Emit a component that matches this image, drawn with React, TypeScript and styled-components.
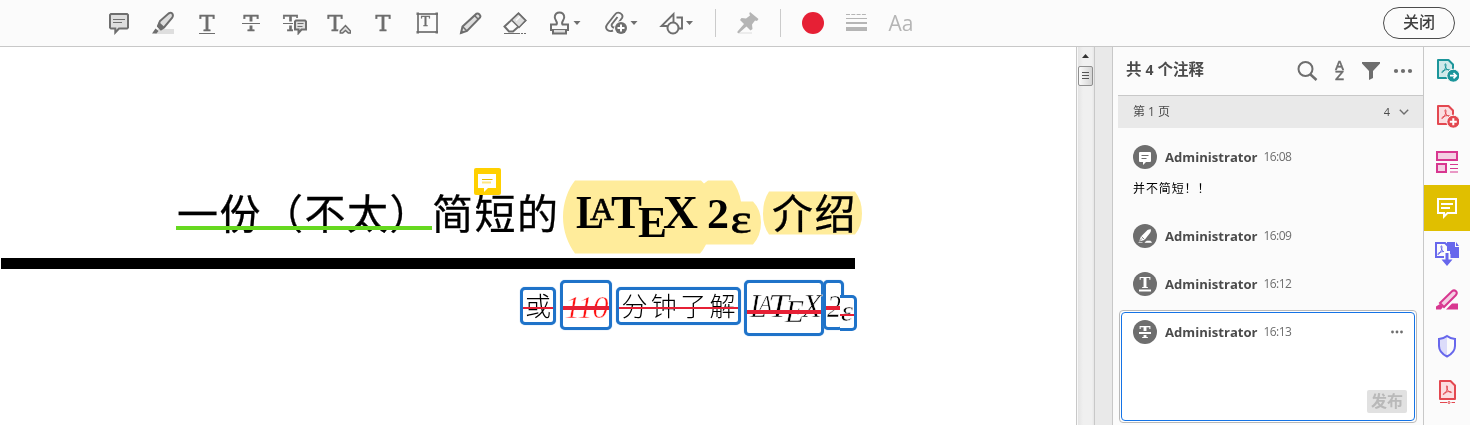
import React from 'react';
import styled, { createGlobalStyle, css } from 'styled-components';

const Global = createGlobalStyle`
  * { box-sizing: border-box; }
  body { margin: 0; background: #fff; overflow: hidden; font-family: "Open Sans", "Noto Sans CJK SC", sans-serif; }
  svg { display: block; flex: none; }
`;

const INK = '#6e6e6e';
const SOFT = '#dedede';

const Page = styled.div`
  width: 1470px;
  height: 425px;
  display: flex;
  flex-direction: column;
  overflow: hidden;
`;
const Toolbar = styled.header`
  height: 47px;
  flex: none;
  display: flex;
  align-items: center;
  padding: 0 15px 0 97px;
  background: #fbfbfb;
  border-bottom: 1px solid #c8c8c8;
`;
const Tool = styled.div<{ $w?: number; $ml?: number }>`
  width: ${(p) => p.$w ?? 44}px;
  margin-left: ${(p) => p.$ml ?? 0}px;
  height: 46px;
  flex: none;
  display: flex;
  align-items: center;
  justify-content: center;
`;
const Divider = styled.i<{ $ml: number }>`
  width: 1px;
  height: 28px;
  flex: none;
  margin-left: ${(p) => p.$ml}px;
  background: #cbcbcb;
`;
const ColorDot = styled.i`
  width: 22px;
  height: 22px;
  border-radius: 50%;
  background: #e62035;
`;
const FontTool = styled.span`
  font: 500 21px/26px "Open Sans", sans-serif;
  color: #b5b5b5;
`;
const CloseButton = styled.button`
  width: 72px;
  height: 32px;
  margin-left: auto;
  padding: 0 0 3px;
  border: 1px solid #4b4b4b;
  border-radius: 16px;
  background: transparent;
  color: #3f3f3f;
  font: 500 16px/27px "Noto Sans CJK SC", sans-serif;
`;

const Body = styled.div`
  flex: 1;
  display: flex;
  min-height: 0;
`;
const Doc = styled.main`
  position: relative;
  width: 1076px;
  flex: none;
  background: #fff;
  overflow: hidden;
`;
const TitleRow = styled.div`
  height: 211px;
  padding: 132px 0 0 177px;
  display: flex;
  align-items: flex-start;
`;
const Han = styled.span<{ $w: number }>`
  width: ${(p) => p.$w}px;
  flex: none;
  white-space: nowrap;
  font: 400 41px/64px "Noto Sans CJK SC", sans-serif;
  letter-spacing: 1.5px;
  -webkit-text-stroke: 0.3px #000;
  color: #000;
`;
const Rule = styled.div`
  width: 854px;
  height: 11px;
  margin-left: 1px;
  background: #000;
`;
const SubtitleRow = styled.div`
  display: flex;
  align-items: flex-start;
  padding: 11px 0 0 520px;
`;
const Struck = styled.span<{ $w: number; $h: number; $top?: number; $ml?: number; $line: number; $thick: number; $cut?: boolean }>`
  position: relative;
  width: ${(p) => p.$w}px;
  height: ${(p) => p.$h}px;
  margin-top: ${(p) => p.$top ?? 0}px;
  margin-left: ${(p) => p.$ml ?? 0}px;
  flex: none;
  display: flex;
  align-items: center;
  justify-content: center;
  border: 3px solid #1f73c9;
  border-radius: 5px;
  background: #fff;
  box-shadow: 0 0 1px #6ba6e2;
  white-space: nowrap;
  ${(p) => p.$cut && css`border-left: 0; border-radius: 0 5px 5px 0; box-shadow: none;`}
  &::after {
    content: "";
    position: absolute;
    left: 0;
    right: 0;
    top: ${(p) => p.$line}px;
    height: ${(p) => p.$thick}px;
    background: #e62035;
  }
`;
const Kai = styled.span`
  font: 300 26px/30px "Noto Sans CJK SC", sans-serif;
  letter-spacing: 3.4px;
  margin-right: -3.4px;
  padding-bottom: 3px;
  color: #000;
`;
const Digits = styled.span`
  font: italic 400 32px/36px "Liberation Serif", serif;
  letter-spacing: -0.8px;
  padding-top: 3px;
  -webkit-text-stroke: 0.5px #fff;
  color: #ff1010;
`;
const Underline = styled.i`
  position: absolute;
  left: 176px;
  top: 179px;
  width: 256px;
  height: 4px;
  background: #66d91f;
`;
const Highlight = styled.svg`
  position: absolute;
  left: 560px;
  top: 131px;
  mix-blend-mode: multiply;
`;
const NotePin = styled.svg`
  position: absolute;
  left: 474px;
  top: 121px;
`;

const ScrollTrack = styled.div`
  width: 19px;
  flex: none;
  display: flex;
  flex-direction: column;
  align-items: center;
  padding-top: 7px;
  border: solid #c8c8c8;
  border-width: 0 1px;
  background: linear-gradient(90deg, #f8f8f8 0 1px, #e4e4e4 1px, #f0f0f0 6px, #f0f0f0 15px, #e5e5e5);
`;
const Thumb = styled.div`
  width: 15px;
  height: 20px;
  margin-top: 8px;
  padding: 5px 3px;
  display: flex;
  flex-direction: column;
  gap: 2px;
  border: 1px solid #8f8f8f;
  border-radius: 2px;
  background: linear-gradient(90deg, #fafafa, #d4d4d4);
  i { height: 1px; background: #555; flex: none; }
`;
const Gutter = styled.div`
  width: 18px;
  flex: none;
  background: #e9e9e9;
  border-right: 1px solid #c8c8c8;
`;
const Panel = styled.aside`
  width: 311px;
  flex: none;
  background: #fbfbfb;
  border-right: 1px solid #c8c8c8;
  overflow: hidden;
`;
const PanelHead = styled.div`
  height: 48px;
  display: flex;
  align-items: center;
  padding: 0 8px 3px 13px;
`;
const PanelTitle = styled.h2`
  margin: 0;
  flex: 1;
  font: 600 15.5px/20px "Open Sans", "Noto Sans CJK SC", sans-serif;
  color: #4b4b4b;
  small { font-size: 14px; font-weight: 700; }
`;
const HeadIcons = styled.div`
  display: flex;
  align-items: center;
  gap: 8px;
  padding-top: 3px;
`;
const Section = styled.div`
  height: 33px;
  margin-left: 5px;
  padding: 0 14px 0 15px;
  display: flex;
  align-items: center;
  gap: 9px;
  background: #e9e9e9;
  border-top: 1px solid #c8c8c8;
  font: 400 12px/18px "Open Sans", "Noto Sans CJK SC", sans-serif;
  color: #4b4b4b;
  span:first-child { flex: 1; }
  span + span { font-size: 11px; }
`;
const Comment = styled.article<{ $h: number; $pt?: number }>`
  height: ${(p) => p.$h}px;
  padding: ${(p) => p.$pt ?? 12}px 0 0 20px;
`;
const ActiveComment = styled.article`
  width: 298px;
  height: 113px;
  margin: 1px 0 0 6px;
  padding: 1px;
  border: 1px solid #b9b9b9;
  border-radius: 4px;
  background: #fff;
`;
const ActiveInner = styled.div`
  height: 100%;
  padding: 7px 7px 7px 11px;
  display: flex;
  flex-direction: column;
  justify-content: space-between;
  border: 1px solid #1473e6;
  border-radius: 4px;
`;
const Meta = styled.div`
  display: flex;
  align-items: center;
  height: 24px;
  padding-right: 3px;
`;
const Author = styled.b`
  margin-left: 8px;
  font: 700 13.1px/18px "Open Sans", sans-serif;
  color: #4b4b4b;
`;
const Time = styled.span`
  margin-left: 6px;
  flex: 1;
  font: 400 12px/18px "Open Sans", sans-serif;
  letter-spacing: -0.6px;
  color: #6e6e6e;
`;
const Message = styled.p`
  margin: 10px 0 0;
  font: 400 12px/18px "Noto Sans CJK SC", sans-serif;
  letter-spacing: 0.9px;
  color: #000;
`;
const PostButton = styled.button`
  align-self: flex-end;
  width: 40px;
  height: 23px;
  padding: 0 0 2px;
  border: 0;
  border-radius: 2px;
  background: #e1e1e1;
  color: #b9b9b9;
  font: 700 16px/21px "Noto Sans CJK SC", sans-serif;
`;
const Rail = styled.nav`
  flex: 1;
  background: #fbfbfb;
`;
const RailItem = styled.div<{ $active?: boolean }>`
  height: 46px;
  display: flex;
  align-items: center;
  justify-content: center;
  background: ${(p) => (p.$active ? '#e0bf00' : 'transparent')};
`;

const Icon = ({ w = 24, h = 24, children }: { w?: number; h?: number; children: React.ReactNode }) => (
  <svg width={w} height={h} viewBox={`0 0 ${w} ${h}`} fill="none" stroke={INK} strokeWidth="2">{children}</svg>
);

const Tee = ({ x = 4.5 }: { x?: number }) => (
  <text x={x} y="20" fontFamily="DejaVu Serif" fontSize="23" textLength="15" lengthAdjust="spacingAndGlyphs" fill={INK} stroke={INK} strokeWidth=".5">T</text>
);
const Caret = ({ x }: { x: number }) => <path d={`M${x} 10h7l-3.5 4z`} fill={INK} stroke="none" />;

const Acrobat = ({ x, y, color }: { x: number; y: number; color: string }) => (
  <path
    transform={`translate(${x} ${y})`}
    d="M4.3 .8C5.6 .8 4.9 3.500 4.300 5.200 3.500 7.300 2 9.600.900 9.500.100 8.900 2.300 7.300 4.700 6.800 7 6.300 9 6.600 9 7.300 8.500 8.200 6.200 6.700 5.200 5.200 4.200 3.700 3.600.800 4.300.800z"
    stroke={color}
    strokeWidth="1"
  />
);

type Glyph = { ch: string; x: number; y: number; size: number; w: number; light?: boolean };
const Lettering = ({ glyphs, w, h, bold, italic }: { glyphs: Glyph[]; w: number; h: number; bold?: boolean; italic?: boolean }) => (
  <svg width={w} height={h} overflow="visible" fontFamily="Liberation Serif" fontStyle={italic ? 'italic' : 'normal'}>
    {glyphs.map((g) => (
      <text
        key={g.ch}
        x={g.x}
        y={g.y}
        fontSize={g.size}
        fontWeight={bold && !g.light ? 700 : 400}
        textLength={g.w}
        lengthAdjust="spacingAndGlyphs"
        stroke={italic ? '#fff' : g.light ? '#000' : 'none'}
        strokeWidth={italic ? 0.5 : 0.7}
      >
        {g.ch}
      </text>
    ))}
  </svg>
);
const titleLogo: Glyph[] = [
  { ch: 'L', x: 15, y: 49, size: 46, w: 28 },
  { ch: 'A', x: 29, y: 41, size: 31, w: 24, light: true },
  { ch: 'T', x: 50, y: 49, size: 46, w: 31 },
  { ch: 'E', x: 77, y: 58, size: 44, w: 29 },
  { ch: 'X', x: 102, y: 49, size: 46, w: 35 },
  { ch: '2', x: 146, y: 49, size: 42, w: 22 },
  { ch: 'ε', x: 169.5, y: 53.5, size: 41, w: 21, light: true },
];
const subLogo: Glyph[] = [
  { ch: 'L', x: 3, y: 34, size: 33, w: 17 },
  { ch: 'A', x: 12, y: 28, size: 23, w: 13 },
  { ch: 'T', x: 21, y: 34, size: 33, w: 21 },
  { ch: 'E', x: 38, y: 39, size: 32, w: 19 },
  { ch: 'X', x: 55, y: 34, size: 33, w: 20 },
];

type Kind = 'note' | 'mark' | 'under' | 'strike';
const Avatar = ({ kind }: { kind: Kind }) => (
  <svg width="24" height="24" viewBox="0 0 24 24">
    <circle cx="12" cy="12" r="12" fill="#6e6e6e" />
    {kind === 'note' && (
      <>
        <path d="M7 7h10a1 1 0 0 1 1 1v8a1 1 0 0 1-1 1h-4l-3 3v-3H7a1 1 0 0 1-1-1V8a1 1 0 0 1 1-1z" fill="#fff" />
        <path d="M8.500 10.500h7M8.500 13.500h5" stroke="#6e6e6e" />
      </>
    )}
    {kind === 'mark' && (
      <>
        <path d="M6 17.500l2-5L14.500 6q2.500-1 3.500-.500 0 2-1 3.500L11.500 16z" fill="#fff" />
        <path d="M8.500 12.500l3 3M6 17.500l3-3" stroke="#6e6e6e" strokeWidth=".8" />
        <path d="M5.500 18.500h4M12 18.500h6.500l-1-1.500h-4z" stroke="#fff" fill="#fff" strokeWidth=".6" />
      </>
    )}
    {kind === 'under' && (
      <>
        <text x="6.500" y="16.300" fontFamily="DejaVu Serif" fontWeight="700" fontSize="14" textLength="11" lengthAdjust="spacingAndGlyphs" fill="#fff">T</text>
        <path d="M6 18.500h12" stroke="#fff" strokeWidth="2" />
      </>
    )}
    {kind === 'strike' && (
      <>
        <text x="6.500" y="18" fontFamily="DejaVu Serif" fontWeight="700" fontSize="16" textLength="11" lengthAdjust="spacingAndGlyphs" fill="#fff">T</text>
        <path d="M6 11.500h12M6 14.500h12" stroke="#6e6e6e" strokeWidth="1" />
        <path d="M6 13h12" stroke="#fff" strokeWidth="2" />
      </>
    )}
  </svg>
);

const Entry = ({ kind, time, more }: { kind: Kind; time: string; more?: boolean }) => (
  <Meta>
    <Avatar kind={kind} />
    <Author>Administrator</Author>
    <Time>{time}</Time>
    {more && (
      <svg width="14" height="4" fill="#6e6e6e">
        <circle cx="2.500" cy="2" r="1.400" /><circle cx="7" cy="2" r="1.400" /><circle cx="11.500" cy="2" r="1.400" />
      </svg>
    )}
  </Meta>
);

export default function App() {
  return (
    <Page>
      <Global />
      <Toolbar>
        <Tool>
          <Icon>
            <path d="M4 3h16l1 1v12.500l-1 1h-8l-3.700 4v-4H4l-1-1V4z" fill={SOFT} />
            <path d="M6 8.500h12M6 11.500h9" strokeWidth="1" />
          </Icon>
        </Tool>
        <Tool>
          <Icon>
            <path d="M7 18h16v5H4z" fill={SOFT} stroke="none" />
            <path d="M7 15l2-5 8.500-7.500q3-1.500 4 .5 1 2-.500 4L13 16.500l-3 2z" fill={SOFT} />
            <path d="M6 15.500L8 11l5.500 5-4 3zM1 22.500l3.500-5 3 2.500-2 2.500z" fill={INK} stroke="none" />
          </Icon>
        </Tool>
        <Tool>
          <Icon><Tee /><path d="M4 22.500h16" strokeWidth="1" /></Icon>
        </Tool>
        <Tool>
          <Icon>
            <Tee />
            <path d="M3 12.500h18" stroke="#fbfbfb" strokeWidth="4" />
            <path d="M3 12.500h18" strokeWidth="1" />
          </Icon>
        </Tool>
        <Tool>
          <Icon w={26}>
            <Tee x={1} />
            <path d="M0 12.500h18" stroke="#fbfbfb" strokeWidth="4" />
            <path d="M1 12.500h12" strokeWidth="1" />
            <path d="M13 9h12v11h-5l-4 4v-4h-3z" fill={SOFT} stroke="#fbfbfb" strokeWidth="4" />
            <path d="M14 9.500h9l1 1v8h-4.500l-3 3.500v-3.500H13v-8z" fill={SOFT} />
            <path d="M15.500 12.500h6M15.500 15.500h5" strokeWidth="1" />
          </Icon>
        </Tool>
        <Tool>
          <Icon>
            <Tee x={0.5} />
            <path d="M13.300 20l5.200-6 5 6v2.500h-2.500L18.500 20 16 22.500h-2.700z" fill={SOFT} stroke="#fbfbfb" strokeWidth="4" />
            <path d="M13.300 20l5.200-5.500 5 5.500v2h-2.200l-2.800-2.500L15.700 22h-2.400z" fill={SOFT} strokeWidth="1.500" />
          </Icon>
        </Tool>
        <Tool><Icon><Tee /></Icon></Tool>
        <Tool>
          <Icon>
            <rect x="3" y="3" width="19" height="18" strokeWidth="1.700" />
            <path d="M1.500 1.500h2.500v2.500h-2.500zM20.500 1.500h2.500v2.500h-2.500zM1.500 20h2.500v2.500h-2.500zM20.500 20h2.500v2.500h-2.500z" fill={INK} stroke="none" />
            <text x="6" y="15" fontFamily="DejaVu Serif" fontSize="12.500" textLength="9" lengthAdjust="spacingAndGlyphs" fill={INK} strokeWidth=".4">T</text>
          </Icon>
        </Tool>
        <Tool>
          <Icon>
            <path d="M2 22l1.500-6.500L17.500 2.700q1.500-.7 3 .8t.6 3L8 20z" fill={SOFT} />
            <path d="M3.500 15.500L8 20M15.500 4.500l4 4" strokeWidth="1.500" />
            <path d="M1 23l1.500-4 2.500 2.500z" fill={INK} stroke="none" />
          </Icon>
        </Tool>
        <Tool>
          <Icon>
            <path d="M1.500 15.500L15.500 2.500l7 7L10 20.500H6z" fill="#fbfbfb" />
            <path d="M8.500 9l7-6.500 7 7-6.500 7z" fill={SOFT} strokeWidth="1.500" />
            <path d="M13 9.500l4-4" stroke="#fff" strokeWidth="1.500" />
            <path d="M1 22.500h14" strokeWidth="1" /><path d="M15 22.500h8" strokeWidth="1" strokeDasharray="2 1" />
          </Icon>
        </Tool>
        <Tool $w={56}>
          <Icon w={32}>
            <path d="M7.500 13.500c2-3-2.500-4.500-1.700-8C6.800 0 14.200 0 15.200 5.500c.8 3.500-3.700 5-1.700 8h5.500v5.500H2v-5.500z" />
            <path d="M4 19v3.500h13V19" fill={SOFT} />
            <Caret x={24.5} />
          </Icon>
        </Tool>
        <Tool $w={56}>
          <Icon w={34}>
            <path d="M9 19.500c-5 2-9-2-5.500-6.500L11 3.500c3-4 9-.5 7 3.500L12 15c-2 3-5.500.500-4-2l5.500-7" strokeWidth="1.900" />
            <circle cx="17" cy="17" r="7" fill="#fbfbfb" stroke="none" />
            <circle cx="17" cy="17" r="6" fill={INK} stroke="none" />
            <path d="M17 13.500v7M13.500 17h7" stroke="#fff" />
            <Caret x={26.5} />
          </Icon>
        </Tool>
        <Tool $w={56}>
          <Icon w={36}>
            <path d="M8 15H2.500L14.500 3v11M17.500 6.500H23v11h-4" strokeWidth="1.900" />
            <circle cx="14" cy="17" r="5.500" fill="#fbfbfb" />
            <Caret x={27} />
          </Icon>
        </Tool>
        <Divider $ml={10} />
        <Tool $ml={10}>
          <Icon>
            <path d="M2 22h14" stroke="#ececec" />
            <path d="M14 1l8.500 7-1.500 2-2-.5-3 4 .5 4.500-2 1.500-4-4L3 22H1.500v-1.500L8 13 4 9l1.500-2 4.500.5 4-3-.7-2z" fill="#b5b5b5" stroke="none" />
          </Icon>
        </Tool>
        <Divider $ml={10} />
        <Tool $ml={10}><ColorDot /></Tool>
        <Tool>
          <Icon>
            <g stroke="#b5b5b5">
              <path d="M1 3.500h21" strokeWidth="1" strokeDasharray="4 1.300" />
              <path d="M1 7.500h21" strokeWidth="1" /><path d="M1 12h21" />
              <path d="M1 18h21" strokeWidth="4" />
            </g>
          </Icon>
        </Tool>
        <Tool><FontTool>Aa</FontTool></Tool>
        <CloseButton>关闭</CloseButton>
      </Toolbar>
      <Body>
        <Doc>
          <TitleRow>
            <Han $w={384}>一份（不太）简短的</Han>
            <Lettering glyphs={titleLogo} w={211} h={60} bold />
            <Han $w={90}>介绍</Han>
          </TitleRow>
          <Rule />
          <SubtitleRow>
            <Struck $w={36} $h={38} $top={7} $line={17} $thick={2}><Kai>或</Kai></Struck>
            <Struck $w={52} $h={50} $ml={4} $line={23} $thick={4}><Digits>110</Digits></Struck>
            <Struck $w={125} $h={38} $top={7} $ml={4} $line={17} $thick={2}><Kai>分钟了解</Kai></Struck>
            <Struck $w={80} $h={56} $ml={3} $line={27} $thick={4}><Lettering glyphs={subLogo} w={74} h={50} italic /></Struck>
            <Struck $w={21} $h={50} $ml={-1} $line={23} $thick={4}>
              <Lettering glyphs={[{ ch: '2', x: 1, y: 34, size: 31, w: 14 }]} w={15} h={44} italic />
            </Struck>
            <Struck $w={17} $h={36} $top={15} $ml={-4} $line={16} $thick={2} $cut>
              <Lettering glyphs={[{ ch: 'ε', x: 0, y: 23, size: 29, w: 12 }]} w={13} h={30} italic />
            </Struck>
          </SubtitleRow>
          <Highlight width="304" height="78">
            <path d="M15 2.500h126l3 3 4-3h24q7 9 9 21h12q8 8 8 21t-8 22h-47q-3 6-6 9H15C8 66 3 53 3 39S8 11 15 2.500z" fill="#ffec9b" />
            <path d="M209 13.500h86q7 9 7 22t-7 21h-86q-6-8-6-21t6-22z" fill="#ffec9b" />
          </Highlight>
          <Underline />
          <NotePin width="27" height="27" viewBox="0 0 27 27">
            <rect width="27" height="27" rx="2" fill="#ffd000" />
            <path d="M4 6h18v14h-8l-4 4v-4H4z" fill="#fff" />
            <path d="M8 11.500h10.500" stroke="#e6bd00" /><path d="M8 14.500h9" stroke="#ffe680" strokeWidth="2" />
          </NotePin>
        </Doc>
        <ScrollTrack>
          <svg width="7" height="4" viewBox="0 0 7 4"><path d="M0 4L3.500 0 7 4z" fill="#333" /></svg>
          <Thumb><i /><i /><i /></Thumb>
        </ScrollTrack>
        <Gutter />
        <Panel>
          <PanelHead>
            <PanelTitle>共 <small>4</small> 个注释</PanelTitle>
            <HeadIcons>
              <Icon><circle cx="10.500" cy="10" r="7" /><path d="M15.500 15.500l6 5.500" strokeWidth="2.500" /></Icon>
              <Icon>
                <text x="8" y="10.500" fontFamily="Open Sans" fontWeight="600" fontSize="12.500" textLength="9" lengthAdjust="spacingAndGlyphs" fill={INK} strokeWidth=".3">A</text>
                <text x="8" y="21" fontFamily="Open Sans" fontWeight="600" fontSize="12.500" textLength="9" lengthAdjust="spacingAndGlyphs" fill={INK} strokeWidth=".3">Z</text>
              </Icon>
              <Icon><path d="M3 3h18v1.500l-7 7.500v7l-4 2v-9L3 4.500z" fill={INK} stroke="none" /></Icon>
              <Icon>
                <g fill={INK} stroke="none"><circle cx="5" cy="12" r="2.100" /><circle cx="12" cy="12" r="2.100" /><circle cx="19" cy="12" r="2.100" /></g>
              </Icon>
            </HeadIcons>
          </PanelHead>
          <Section>
            <span>第 1 页</span>
            <span>4</span>
            <Icon w={10} h={6}><path d="M.8 .8L5 5 9.200.8" strokeWidth="1.400" /></Icon>
          </Section>
          <Comment $h={84} $pt={17}>
            <Entry kind="note" time="16:08" />
            <Message>并不简短！！</Message>
          </Comment>
          <Comment $h={48}><Entry kind="mark" time="16:09" /></Comment>
          <Comment $h={49}><Entry kind="under" time="16:12" /></Comment>
          <ActiveComment>
            <ActiveInner>
              <Entry kind="strike" time="16:13" more />
              <PostButton>发布</PostButton>
            </ActiveInner>
          </ActiveComment>
        </Panel>
        <Rail>
          <RailItem>
            <Icon>
              <path d="M3 2h10.500L18 6.500V20H3z" fill="#cfe9ea" stroke="#1b959a" strokeLinejoin="round" />
              <Acrobat x={6} y={5} color="#1b959a" />
              <circle cx="18.300" cy="17.700" r="6.500" fill="#1b959a" stroke="#fbfbfb" strokeWidth="1" />
              <path d="M15 17.700h6M18.500 15l2.700 2.700-2.700 2.700" stroke="#fff" strokeWidth="1.700" />
            </Icon>
          </RailItem>
          <RailItem>
            <Icon>
              <path d="M3 2h10.500L18 6.500V20H3z" fill="#fbdde0" stroke="#e34850" strokeLinejoin="round" />
              <Acrobat x={6} y={5} color="#e34850" />
              <circle cx="18.300" cy="17.700" r="6.500" fill="#e34850" stroke="#fbfbfb" strokeWidth="1" />
              <path d="M14.800 17.700h7M18.300 14.200v7" stroke="#fff" />
            </Icon>
          </RailItem>
          <RailItem>
            <Icon>
              <g stroke="#d83790">
                <rect x="2" y="2" width="20" height="8" fill="#f4cfe3" /><rect x="2" y="14" width="9" height="8" fill="#f4cfe3" />
                <path d="M15 14.500h8M15 18.500h8M15 22h8" strokeWidth="1.200" />
              </g>
            </Icon>
          </RailItem>
          <RailItem $active>
            <Icon><path d="M3 3h18v14h-8.500L9 20.500V17H3zM6 8h12M6 12h9" stroke="#fff" strokeWidth="2" /></Icon>
          </RailItem>
          <RailItem>
            <Icon>
              <path d="M12 0h8v5h4v11h-8.500v-4H12z" fill="#6767ec" stroke="none" /><path d="M21 0l3 4h-3z" fill="#6767ec" stroke="none" />
              <path d="M9 15H1V1h9l3 3v5" fill="#fbfbfb" stroke="#6767ec" />
              <Acrobat x={2} y={3} color="#6767ec" />
              <path d="M9 9h6v8H9z" fill="#fbfbfb" stroke="none" />
              <path d="M10.500 11h3v6.500h4L12 24l-5.500-6.500h4z" fill="#6767ec" stroke="none" />
            </Icon>
          </RailItem>
          <RailItem>
            <Icon>
              <path d="M11 21.500l6-6h6v6z" fill="#d83790" stroke="none" />
              <path d="M5 15L17 3.200q2-1.700 4 0 1.600 1.800 0 3.800L9 19z" fill="#f4cfe3" stroke="#d83790" />
              <path d="M1 21.500v-3l4-2.500 3 3-2 2.500z" fill="#d83790" stroke="none" />
            </Icon>
          </RailItem>
          <RailItem>
            <Icon>
              <path d="M12 2v20c-6-3-8-6-8-10V5q5 0 8-3z" fill="#dcdcfa" stroke="none" />
              <path d="M12 2q3 2.500 8 3v7c0 4-2 7.500-8 10.500C6 19.500 4 16 4 12V5q5-.5 8-3z" stroke="#6767ec" />
            </Icon>
          </RailItem>
          <RailItem>
            <Icon>
              <path d="M5 1h10.500L20 5.500V19H5z" fill="#fbdde0" stroke="#e34850" strokeLinejoin="round" />
              <Acrobat x={7.5} y={5} color="#e34850" />
              <path d="M5 22.500h7M16.500 22.500H20" stroke="#e34850" strokeWidth="1" /><circle cx="14" cy="22.500" r="1" stroke="#e34850" strokeWidth="1" />
            </Icon>
          </RailItem>
        </Rail>
      </Body>
    </Page>
  );
}
